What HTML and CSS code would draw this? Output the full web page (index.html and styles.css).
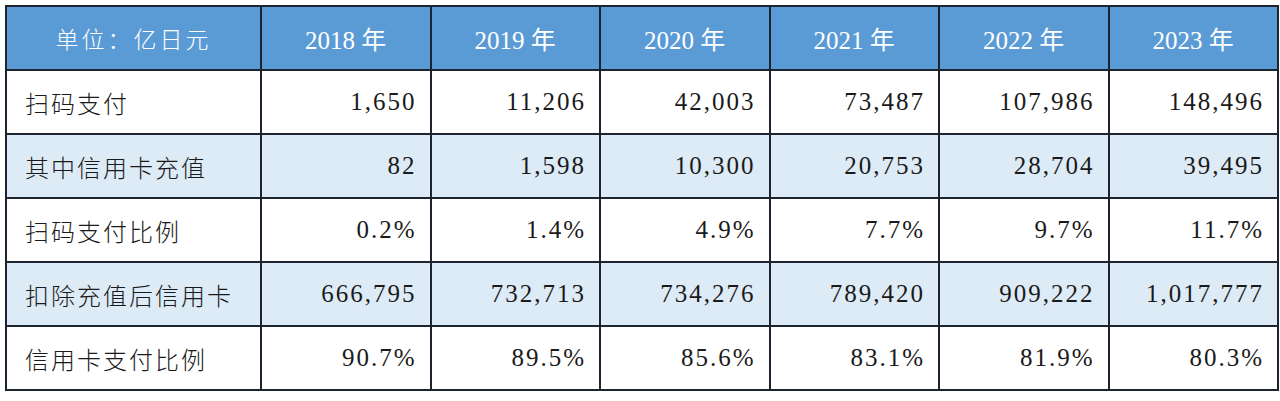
FILE: index.html
```html
<!DOCTYPE html>
<html lang="zh-CN">
<head>
<meta charset="utf-8">
<title>扫码支付与信用卡支付</title>
<link rel="stylesheet" href="styles.css">
</head>
<body>
<table class="data">
  <colgroup>
    <col class="c-label">
    <col class="c-year"><col class="c-year"><col class="c-year">
    <col class="c-year"><col class="c-year"><col class="c-year">
  </colgroup>
  <thead>
    <tr>
      <th class="unit">单位：亿日元</th>
      <th>2018 年</th>
      <th>2019 年</th>
      <th>2020 年</th>
      <th>2021 年</th>
      <th>2022 年</th>
      <th>2023 年</th>
    </tr>
  </thead>
  <tbody>
    <tr>
      <td class="label">扫码支付</td>
      <td>1,650</td><td>11,206</td><td>42,003</td><td>73,487</td><td>107,986</td><td>148,496</td>
    </tr>
    <tr class="alt">
      <td class="label">其中信用卡充值</td>
      <td>82</td><td>1,598</td><td>10,300</td><td>20,753</td><td>28,704</td><td>39,495</td>
    </tr>
    <tr>
      <td class="label">扫码支付比例</td>
      <td>0.2%</td><td>1.4%</td><td>4.9%</td><td>7.7%</td><td>9.7%</td><td>11.7%</td>
    </tr>
    <tr class="alt">
      <td class="label">扣除充值后信用卡</td>
      <td>666,795</td><td>732,713</td><td>734,276</td><td>789,420</td><td>909,222</td><td>1,017,777</td>
    </tr>
    <tr>
      <td class="label">信用卡支付比例</td>
      <td>90.7%</td><td>89.5%</td><td>85.6%</td><td>83.1%</td><td>81.9%</td><td>80.3%</td>
    </tr>
  </tbody>
</table>
</body>
</html>
```

FILE: styles.css
```css
html, body {
  margin: 0;
  padding: 0;
  background: #ffffff;
}

body {
  padding: 5px 0 0 5px;
}

.data {
  border-collapse: collapse;
  table-layout: fixed;
  width: 1272px;
  font-family: "Liberation Serif", "Noto Sans CJK SC", serif;
  color: #1a1a1a;
}

.c-label { width: 255px; }
.c-year { width: 169.5px; }

.data th,
.data td {
  border: 2px solid #1c2430;
  height: 64px;
  padding: 0 15px;
  box-sizing: border-box;
}

.data th {
  background: #5b9bd5;
  color: #ffffff;
  font-weight: normal;
  font-size: 25px;
  text-align: center;
  letter-spacing: 0;
}

.data th.unit {
  letter-spacing: 3px;
  font-family: "Noto Sans CJK SC", sans-serif;
  font-weight: 300;
  font-size: 23px;
}

.data td {
  text-align: right;
  font-size: 25px;
  letter-spacing: 2px;
  padding-right: 13px;
}

.data td.label {
  text-align: left;
  padding-left: 18px;
  font-family: "Noto Sans CJK SC", sans-serif;
  font-weight: 300;
  font-size: 24px;
  letter-spacing: 2px;
}

.data tr.alt td {
  background: #ddebf7;
}
```
